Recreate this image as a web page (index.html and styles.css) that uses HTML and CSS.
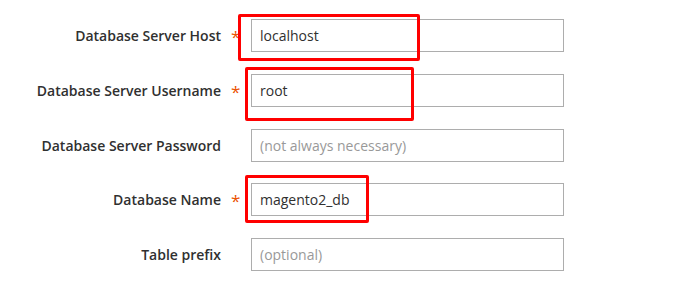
FILE: index.html
```html
<!DOCTYPE html>
<html lang="en">
<head>
    <meta charset="UTF-8" />
    <title>Database setup</title>
    <link rel="stylesheet" href="styles.css">
</head>
<body>
    <form class="db-form">
        <div class="field">
            <label class="field-label required">Database Server Host</label>
            <div class="control">
                <input class="text-input" type="text" value="localhost">
                <span class="mark mark-host"></span>
            </div>
        </div>

        <div class="field">
            <label class="field-label required">Database Server Username</label>
            <div class="control">
                <input class="text-input" type="text" value="root">
                <span class="mark mark-user"></span>
            </div>
        </div>

        <div class="field">
            <label class="field-label">Database Server Password</label>
            <div class="control">
                <input class="text-input" type="password" placeholder="(not always necessary)">
            </div>
        </div>

        <div class="field">
            <label class="field-label required">Database Name</label>
            <div class="control">
                <input class="text-input" type="text" value="magento2_db">
                <span class="mark mark-name"></span>
            </div>
        </div>

        <div class="field">
            <label class="field-label">Table prefix</label>
            <div class="control">
                <input class="text-input" type="text" placeholder="(optional)">
            </div>
        </div>
    </form>
</body>
</html>
```

FILE: styles.css
```css
body {
    margin: 0;
    background: #ffffff;
    font-family: 'Open Sans', sans-serif;
    color: #303030;
}

.db-form {
    padding-top: 19px;
}

.field {
    display: grid;
    grid-template-columns: 221px 30px 313px;
    align-items: center;
    margin-bottom: 21.75px;
}

.field-label {
    grid-column: 1 / 3;
    display: grid;
    grid-template-columns: 221px 30px;
    align-items: center;
    font-size: 14px;
    font-weight: 600;
    color: #303030;
    text-align: right;
}

.field-label.required::after {
    content: '*';
    color: #eb5202;
    font-size: 17px;
    font-weight: 400;
    text-align: left;
    padding-left: 10px;
    margin-top: 2px;
}

.control {
    position: relative;
    grid-column: 3;
}

.text-input {
    box-sizing: border-box;
    display: block;
    width: 313px;
    height: 33px;
    margin: 0;
    padding: 0 8px;
    border: 1px solid #adadad;
    border-radius: 0;
    font-family: 'Open Sans', sans-serif;
    font-size: 14px;
    color: #303030;
    background: #ffffff;
}

.text-input::placeholder {
    color: #999999;
}

.mark {
    position: absolute;
    box-sizing: border-box;
    border: 3px solid #ff0000;
    border-radius: 2px;
    pointer-events: none;
}

.mark-host {
    left: -13px;
    top: -5px;
    width: 182px;
    height: 47px;
}

.mark-user {
    left: -6px;
    top: -7px;
    width: 169px;
    height: 54px;
}

.mark-name {
    left: -6px;
    top: -8px;
    width: 124px;
    height: 48px;
}
```
